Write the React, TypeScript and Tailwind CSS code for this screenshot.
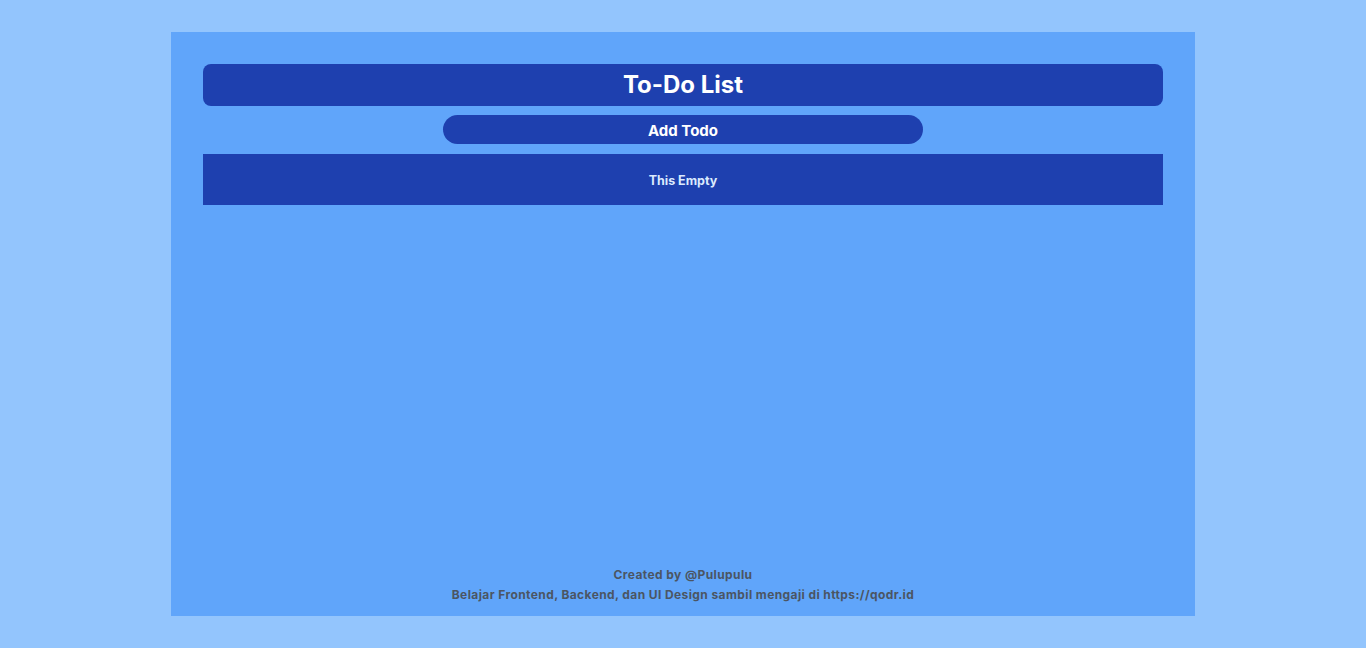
export default function App() {
  return (
    <div className="min-h-screen bg-[#93c5fd] pt-8 font-['Inter',sans-serif]">
      <div className="mx-auto flex h-[584px] w-[1024px] flex-col bg-[#60a5fa] px-8 pt-8 pb-[14px]">
        <h1 className="flex h-[42px] items-center justify-center rounded-lg bg-[#1e40af] text-2xl font-bold text-white">
          To-Do List
        </h1>
        <button className="mx-auto mt-[9px] flex h-[29px] w-[480px] items-center justify-center rounded-full bg-[#1e40af] pt-[3px] text-[15px] font-bold text-white">
          Add Todo
        </button>
        <div className="mt-[10px] flex h-[51px] items-center justify-center bg-[#1e40af] pt-[3px] text-[12.5px] font-bold text-[#dbeafe]">
          This Empty
        </div>
        <footer className="mt-auto flex flex-col items-center gap-[5px] text-xs leading-[15px] font-bold tracking-[0.4px] text-[#4b5563]">
          <p>Created by @Pulupulu</p>
          <p>Belajar Frontend, Backend, dan UI Design sambil mengaji di https://qodr.id</p>
        </footer>
      </div>
    </div>
  );
}
